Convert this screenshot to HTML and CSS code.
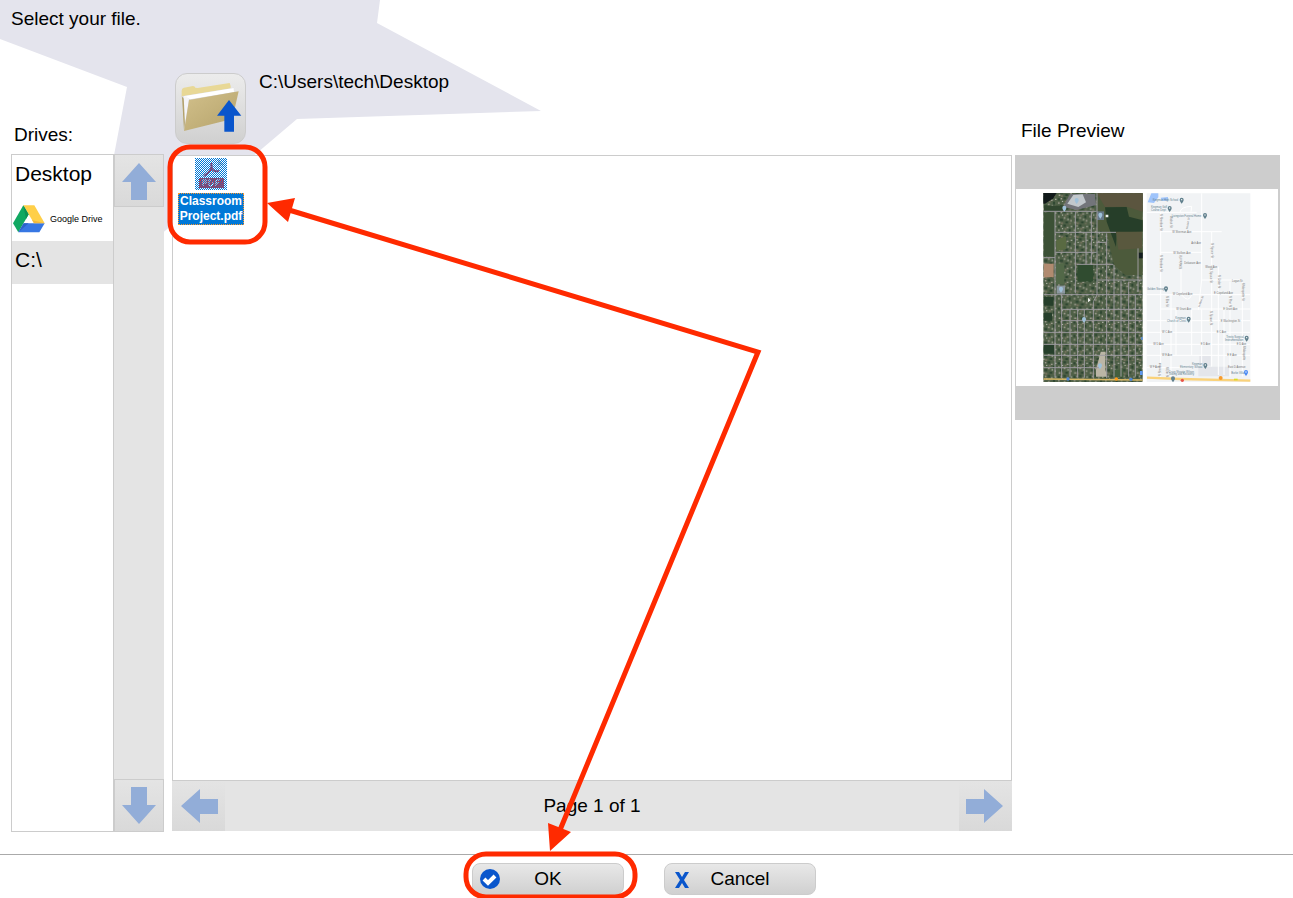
FILE: index.html
```
<!DOCTYPE html>
<html lang="en">
  <head>
    <meta charset="UTF-8">
    <meta name="viewport" content="width=device-width, initial-scale=1">
    <title>Select your file</title>
    <link rel="stylesheet" href="styles.css">
  </head>
  <body>
    <div class="page">
      <svg class="star" width="541" height="300" viewBox="0 0 541 300" aria-hidden="true">
        <path d="M0 0H380L377 23L541 111L297 119L87 297L127 87L0 39Z" fill="#e4e4ed"/>
      </svg>

      <h1 class="title">Select your file.</h1>

      <main class="picker">
        <section class="drives">
          <h2 class="drives_label">Drives:</h2>
          <div class="drives_box">
            <div class="drive_list">
              <button type="button" class="drive">Desktop</button>
              <button type="button" class="drive google">
                <svg width="32" height="28" viewBox="39 254 96 84" aria-hidden="true">
                  <path d="M70 255L86 282L55 336L39 309Z" fill="#11a861"/>
                  <path d="M70 255H103L134 309H102Z" fill="#ffcf48"/>
                  <path d="M71 309H134L118 336H55Z" fill="#3777e3"/>
                  <path d="M70 255L86 282L78 296Z" fill="#0e9154"/>
                  <path d="M134 309H102L96 299Z" fill="#f3b93c"/>
                  <path d="M71 309L55 336L86 309Z" fill="#2b63c8"/>
                </svg>
                <span>Google Drive</span>
              </button>
              <button type="button" class="drive selected">C:\</button>
            </div>
            <div class="drive_scroll">
              <button type="button" class="arrow_button" aria-label="Scroll up">
                <svg width="34" height="38" viewBox="0 0 34 38"><path d="M17 1L34 20H25V38H9V20H0Z" fill="#92add8"/></svg>
              </button>
              <button type="button" class="arrow_button" aria-label="Scroll down">
                <svg width="34" height="38" viewBox="0 0 34 38"><path d="M17 37L34 18H25V0H9V18H0Z" fill="#92add8"/></svg>
              </button>
            </div>
          </div>
        </section>

        <section class="files">
          <div class="location">
            <button type="button" class="up_button" aria-label="Up one folder">
              <svg width="69" height="69" viewBox="33 28 207 207">
                <defs>
                  <linearGradient id="folder" x1="0" y1="0" x2="1" y2="1">
                    <stop offset="0" stop-color="#d2c08b"/>
                    <stop offset="1" stop-color="#b5a36b"/>
                  </linearGradient>
                </defs>
                <path d="M50 78Q50 70 57 69L84 64Q90 64 91 69L98 70L194 55L197 64V80L50 98Z" fill="#e8d896"/>
                <path d="M50 95L206 69L208 88L60 180Z" fill="#d9d9df"/>
                <path d="M54 95L206 70L207 82L76 104Z" fill="#fff"/>
                <path d="M51 96L57 197L67 112Z" fill="#b3a26c"/>
                <path d="M56 96L60 180L72 103L64 95Z" fill="#f5f5f8"/>
                <path d="M72 106L221 80L202 163L57 199Z" fill="url(#folder)"/>
                <path d="M192 106L229 153H207V201H178V153H156Z" fill="#0a56cc"/>
              </svg>
            </button>
            <p class="path">C:\Users\tech\Desktop</p>
          </div>
          <div class="file_area">
            <button type="button" class="file">
              <svg width="32" height="32" viewBox="0 0 32 32" aria-hidden="true">
                <defs>
                  <pattern id="dither" width="2" height="2" patternUnits="userSpaceOnUse">
                    <path d="M0 0h1v1h-1zM1 1h1v1h-1z" fill="#0078d7" shape-rendering="crispEdges"/>
                  </pattern>
                </defs>
                <path d="M0 0H32V32H0Z" fill="#fff"/>
                <path d="M4 20H29V30H4Z" fill="#f02020"/>
                <path d="M16 5C18 9 15 14 9 18M16 9C17 12 20 14 24 13" fill="none" stroke="#e02030" stroke-width="2"/>
                <path d="M23 1L29 7H23Z" fill="#ccc"/>
                <path d="M8 28V22H11V25H8M14 22V28H16L18 26V24L16 22ZM21 28V22H25M21 25H24" fill="none" stroke="#fff"/>
                <path d="M0 0H32V32H0Z" fill="url(#dither)"/>
              </svg>
              <span class="file_name">Classroom Project.pdf</span>
            </button>
          </div>
          <div class="pager">
            <button type="button" class="arrow_button side" aria-label="Previous page">
              <svg width="38" height="34" viewBox="0 0 38 34"><path d="M1 17L20 0V10H38V25H20V34Z" fill="#92add8"/></svg>
            </button>
            <span class="page_count">Page 1 of 1</span>
            <button type="button" class="arrow_button side" aria-label="Next page">
              <svg width="38" height="34" viewBox="0 0 38 34"><path d="M37 17L18 0V10H0V25H18V34Z" fill="#92add8"/></svg>
            </button>
          </div>
        </section>

        <section class="preview">
          <h2 class="preview_label">File Preview</h2>
          <div class="preview_box">
            <svg class="preview_page" width="262" height="197" viewBox="18 222 786 591" role="img" aria-label="Classroom Project.pdf">
              <defs>
                <pattern id="houses" width="47" height="41" patternUnits="userSpaceOnUse">
                  <path d="M0 0H47V41H0Z" fill="#4f6047"/>
                  <path d="M2 4h7v6h-7zM19 1h8v6h-8zM35 14h6v9h-6zM9 24h9v7h-9zM25 32h8v6h-8z" fill="#2e4631"/>
                  <path d="M11 3h4v4h-4zM29 8h5v4h-5zM3 16h5v4h-5zM20 20h5v4h-5zM40 28h4v5h-4zM5 34h5v4h-5z" fill="#aba59a"/>
                  <path d="M15 12h3v3h-3zM31 25h4v3h-4zM42 5h3v4h-3z" fill="#d8d6cf"/>
                  <path d="M23 12h5v4h-5zM12 36h6v4h-6zM37 37h5v3h-5z" fill="#7f7763"/>
                </pattern>
                <path id="pin" d="M0 10C-3 5 -6 3 -6 -2A6 6 0 0 1 6 -2C6 3 3 5 0 10Z"/>
              </defs>
              <path d="M18 222H804V813H18Z" fill="#fff"/>

              <!-- satellite side -->
              <path d="M100 234H398V801H100Z" fill="url(#houses)"/>
              <path d="M261 235H398V480H345L312 450L290 355L262 345Z" fill="#4c5a3b"/>
              <path d="M261 235H398V290L350 275L285 276Z" fill="#5b553f"/>
              <path d="M285 277L350 276L357 305L398 316V350L320 352L318 396L290 320Z" fill="#263e29"/>
              <path d="M318 350H396V400L325 404Z" fill="#59583e"/>
              <path d="M100 234H140L130 250L105 266H100Z" fill="#11191a"/>
              <path d="M102 272H160V290H102Z" fill="#31462f"/>
              <path d="M160 275L180 237H255L258 270L200 285Z" fill="#73757a"/>
              <path d="M172 266L190 240L218 238L228 262L205 276Z" fill="#c2c8cc"/>
              <path d="M101 292H135V425H101Z" fill="#3c5136"/>
              <path d="M139 375L168 364V402L140 408Z" fill="#596a42"/>
              <path d="M101 446H131V487H101Z" fill="#b18b70"/>
              <path d="M137 445H163V507H137Z" fill="#526848"/>
              <path d="M202 448H250V500H202Z" fill="#304c30"/>
              <path d="M140 512H165V536H140Z" fill="#8b979f"/>
              <path d="M101 545H130V572H101ZM101 593H126V617H101ZM101 690H132V716H101Z" fill="#263f2b"/>
              <path d="M310 764H340V787H310Z" fill="#435f3e"/>
              <path d="M258 764L272 710H286V764L292 785H258Z" fill="#bbb5a5"/>
              <path d="M261 289H282V315H261Z" fill="#667886"/>
              <path d="M386 413H398V430H386Z" fill="#151f20"/>
              <path d="M101 289H260M135 290V788M136 352H318M136 412H260M196 290V535M261 235V540L250 560V790M290 355V790M312 450V785M384 400V530M101 428H135M263 495H398M101 539H398M155 540V790M154 583H398M155 617H398M101 652H398M101 688H398M101 721H398M101 758H270M180 583V785M203 583V788M223 583V788M333 498V785M356 500V785M376 540V785M228 352V448M244 290V450M200 448H310M260 382H290" fill="none" stroke="#9d9a9f" stroke-width="3"/>
              <path d="M101 792L398 795" stroke="#d8b864" stroke-width="5"/>
              <g fill="#9fc1d9">
                <use href="#pin" x="200" y="257"/>
                <use href="#pin" x="163" y="280"/>
                <use href="#pin" x="271" y="301"/>
                <use href="#pin" x="153" y="523"/>
                <use href="#pin" x="222" y="614"/>
                <use href="#pin" x="270" y="753"/>
              </g>
              <path d="M234 548l8 8-8 6zM287 299h8v8h-8z" fill="#eef0ed"/>
              <circle cx="174" cy="792" r="5" fill="#4e85d3"/>
              <circle cx="319" cy="792" r="5" fill="#ff9d19"/>
              <circle cx="363" cy="793" r="5" fill="#4e85d3"/>
              <path d="M390 768h8v12h-8zM394 666h4v9h-4z" fill="#5e97ed"/>

              <!-- street map side -->
              <path d="M410 235H721V801H410Z" fill="#f1f3f5"/>
              <path d="M413 262L424 235H445V247L432 264ZM452 248L474 246V257H455Z" fill="#9fc4fb"/>
              <path d="M568 722H602V752H568ZM565 755H658V784H565Z" fill="#e4e6eb"/>
              <path d="M410 292H560M452 292V788M452 350H635M452 412H575M575 235V495M410 539H720M452 582H720M410 617H720M410 652H720M410 688H720M410 721H720M575 495H700M605 350V755M483 540V785M513 412V535M625 455V780M660 500V785M545 583V720M575 583V755M697 500V785M410 758H550M510 292Q512 275 545 274L543 290M515 540Q535 565 545 540M575 495L565 585M498 583V720M642 583V780" fill="none" stroke="#fff" stroke-width="3"/>
              <path d="M411 788L510 792L721 797" fill="none" stroke="#fad27a" stroke-width="7"/>
              <g class="map_text">
                <text x="487" y="354">W Sherman Ave</text>
                <text x="544" y="387">Ash Ave</text>
                <text x="490" y="416">W Stolben Ave</text>
                <text x="523" y="447">Delaware Ave</text>
                <text x="586" y="458">Wood Ave</text>
                <text x="666" y="500">Logan St</text>
                <text x="488" y="541">W Copeland Ave</text>
                <text x="612" y="538">E Copeland Ave</text>
                <text x="499" y="585">W Grant Ave</text>
                <text x="640" y="585">E Grant Ave</text>
                <text x="632" y="620">E Washington St</text>
                <text x="456" y="655">W C Ave</text>
                <text x="620" y="655">E C Ave</text>
                <text x="430" y="690">W D Ave</text>
                <text x="572" y="690">E D Ave</text>
                <text x="680" y="690">E D Ave</text>
                <text x="456" y="724">W E Ave</text>
                <text x="652" y="724">E E Ave</text>
                <text x="419" y="760">W F Ave</text>
                <text x="654" y="760">East D Avenue</text>
                <text transform="translate(449 297) rotate(90)">N Sheridan St</text>
                <text transform="translate(449 420) rotate(90)">N Sheridan St</text>
                <text transform="translate(480 303) rotate(90)">Walnut St</text>
                <text transform="translate(533 343) rotate(-80)">N Main St</text>
                <text transform="translate(517 463) rotate(-90)">N Walnut St</text>
                <text transform="translate(604 385) rotate(90)">N Spruce St</text>
                <text transform="translate(601 460) rotate(90)">N Spruce St</text>
                <text transform="translate(624 480) rotate(90)">N Cedar St</text>
                <text transform="translate(697 503) rotate(90)">N Marquette St</text>
                <text transform="translate(467 543) rotate(90)">N Elm St</text>
                <text transform="translate(569 577) rotate(-70)">N Main St</text>
                <text transform="translate(657 543) rotate(90)">N Pine St</text>
                <text transform="translate(601 588) rotate(90)">N Spruce St</text>
                <text transform="translate(699 692) rotate(90)">N Marquette</text>
                <text transform="translate(454 783) rotate(-90)">N Sheridan</text>
                <text transform="translate(467 755) rotate(90)">N Elm St</text>
              </g>
              <g class="map_text place">
                <text x="428" y="259">Kingman High School</text>
                <text x="423" y="280">Kingman Golf</text>
                <text x="423" y="288">Course Dept</text>
                <text x="485" y="305">Livingston Funeral Home</text>
                <text x="411" y="524">Golden Storage</text>
                <text x="496" y="612">Kingman</text>
                <text x="471" y="620">Church of Christ</text>
                <text x="649" y="669">Trinity Surgical</text>
                <text x="645" y="677">Instrumentation</text>
                <text x="546" y="751">Kingman</text>
                <text x="510" y="760">Elementary School</text>
                <text x="476" y="773">Crazy Shootin Wilson</text>
                <text x="476" y="781">Towing and Recovery</text>
                <text x="664" y="776">Burke Villas</text>
              </g>
              <g fill="#61808d">
                <use href="#pin" x="515" y="256"/>
                <use href="#pin" x="479" y="281"/>
                <use href="#pin" x="585" y="302"/>
                <use href="#pin" x="468" y="522"/>
                <use href="#pin" x="536" y="613"/>
                <use href="#pin" x="710" y="670"/>
                <use href="#pin" x="586" y="752"/>
                <use href="#pin" x="489" y="792"/>
                <use href="#pin" x="708" y="773" fill="#4a8af4"/>
              </g>
              <g fill="#fff">
                <circle cx="515" cy="254" r="2"/>
                <circle cx="479" cy="279" r="2"/>
                <circle cx="585" cy="300" r="2"/>
                <circle cx="468" cy="520" r="2"/>
                <circle cx="536" cy="611" r="2"/>
                <circle cx="710" cy="668" r="2"/>
                <circle cx="586" cy="750" r="2"/>
                <circle cx="708" cy="771" r="2"/>
              </g>
              <circle cx="517" cy="796" r="5" fill="#e95348"/>
              <circle cx="632" cy="789" r="6" fill="#f79b2d"/>
              <path d="M672 791h11v5h-11z" fill="#d9dd24"/>
            </svg>
          </div>
        </section>
      </main>

      <footer class="actions">
        <button type="button" class="action">
          <svg width="20" height="20" viewBox="0 0 20 20" aria-hidden="true">
            <circle cx="10" cy="10" r="10" fill="#0a56cc"/>
            <path d="M4 10L8 14L15 7" fill="none" stroke="#fff" stroke-width="4"/>
          </svg>
          <span>OK</span>
        </button>
        <button type="button" class="action">
          <svg width="20" height="20" viewBox="0 0 20 20" aria-hidden="true">
            <path d="M3 3H7L10 8L13 3H17L12 11L17 19H13L10 14L7 19H3L8 11Z" fill="#0a56cc"/>
          </svg>
          <span>Cancel</span>
        </button>
      </footer>

      <!-- red callouts pointing at the file and the OK button -->
      <svg class="callouts" width="800" height="898" viewBox="0 0 800 898" aria-hidden="true">
        <g fill="none" stroke="#ff2a00" stroke-width="5">
          <rect x="170" y="147" width="95" height="95" rx="20"/>
          <rect x="466" y="854" width="169" height="43" rx="20"/>
          <path d="M289 210L758 352L560 830"/>
        </g>
        <path d="M267 203L295 198L288 222ZM550 851L548 823L571 832Z" fill="#ff2a00"/>
      </svg>
    </div>
  </body>
</html>
```
FILE: styles.css
```
* {
  box-sizing: border-box;
}

body {
  margin: 0;
  background-color: #fff;
  color: #000;
  font-family: "Liberation Sans", Arial, sans-serif;
  font-size: 19px;
  line-height: 22px;
}

h1,
h2,
p {
  margin: 0;
  font-size: 19px;
  font-weight: normal;
}

button {
  margin: 0;
  padding: 0;
  border: 0;
  background: none;
  color: inherit;
  font-family: inherit;
  font-size: 19px;
  line-height: 22px;
  cursor: pointer;
}

svg {
  display: block;
  flex: none;
}

.page {
  position: relative;
  display: flex;
  flex-direction: column;
  min-height: 100vh;
  overflow: hidden;
}

/* pale star behind the top left corner */
.star {
  position: absolute;
  top: 0;
  left: 0;
  z-index: -1;
}

.title {
  padding: 8px 11px 0;
}

.picker {
  flex: 1;
  display: grid;
  grid-template-columns: 153px 1fr 265px;
  padding: 0 13px 22px 11px;
}

.drives,
.files,
.preview {
  display: flex;
  flex-direction: column;
}

.drives_label {
  padding: 94px 3px 8px;
}

.drives_box {
  flex: 1;
  display: flex;
}

.drive_list {
  flex: 1;
  background-color: #fff;
  border: 1px solid #ccc;
}

.drive {
  display: flex;
  align-items: center;
  width: 100%;
  height: 43px;
  padding: 0 3px 6px;
  font-size: 21px;
}

.drive.google {
  gap: 5px;
  padding: 0 1px 2px;
  font-size: 9px;
}

.drive.selected {
  background-color: #e4e4e4;
}

.drive_scroll {
  display: flex;
  flex-direction: column;
  justify-content: space-between;
  width: 50px;
  background-color: #e4e4e4;
}

.arrow_button {
  display: flex;
  align-items: center;
  justify-content: center;
  height: 53px;
  border: 1px solid #ccc;
  background: linear-gradient(#e4e4e4, #d9d9d9);
}

.arrow_button.side {
  width: 53px;
  height: 50px;
  border: 0;
}

.files {
  padding: 0 3px 1px 8px;
}

.location {
  display: flex;
  gap: 13px;
  padding: 41px 3px 11px;
}

.up_button {
  width: 71px;
  height: 71px;
  margin-top: 2px;
  border: 1px solid #ccc;
  border-radius: 12px;
  background: linear-gradient(#ececec, #d0d0d0);
}

.file_area {
  flex: 1;
  padding: 2px 5px;
  background-color: #fff;
  border: 1px solid #ccc;
}

.file {
  display: flex;
  flex-direction: column;
  align-items: center;
  gap: 3px;
  width: 66px;
}

.file_name {
  width: 100%;
  border: 1px dotted #ff9a2e;
  background-color: #0078d7;
  color: #fff;
  font-size: 12px;
  font-weight: bold;
  line-height: 15px;
}

.pager {
  display: flex;
  align-items: center;
  justify-content: space-between;
  background-color: #e4e4e4;
}

.preview_label {
  padding: 90px 6px 13px;
}

.preview_box {
  display: flex;
  align-items: center;
  height: 265px;
  padding-left: 1px;
  background-color: #cdcdcd;
}

.map_text {
  fill: #777;
  font-size: 8px;
}

.map_text.place {
  fill: #61808d;
}

.actions {
  display: flex;
  justify-content: center;
  gap: 40px;
  padding: 8px 13px 3px 8px;
  border-top: 1px solid #aaa;
}

.action {
  display: flex;
  align-items: center;
  width: 152px;
  height: 32px;
  padding: 0 7px;
  border: 1px solid #ccc;
  border-radius: 8px;
  background: linear-gradient(#e8e8e8, #d0d0d0);
}

.action span {
  flex: 1;
  padding-right: 20px;
}

.callouts {
  position: absolute;
  top: 0;
  left: 0;
  pointer-events: none;
}
```
